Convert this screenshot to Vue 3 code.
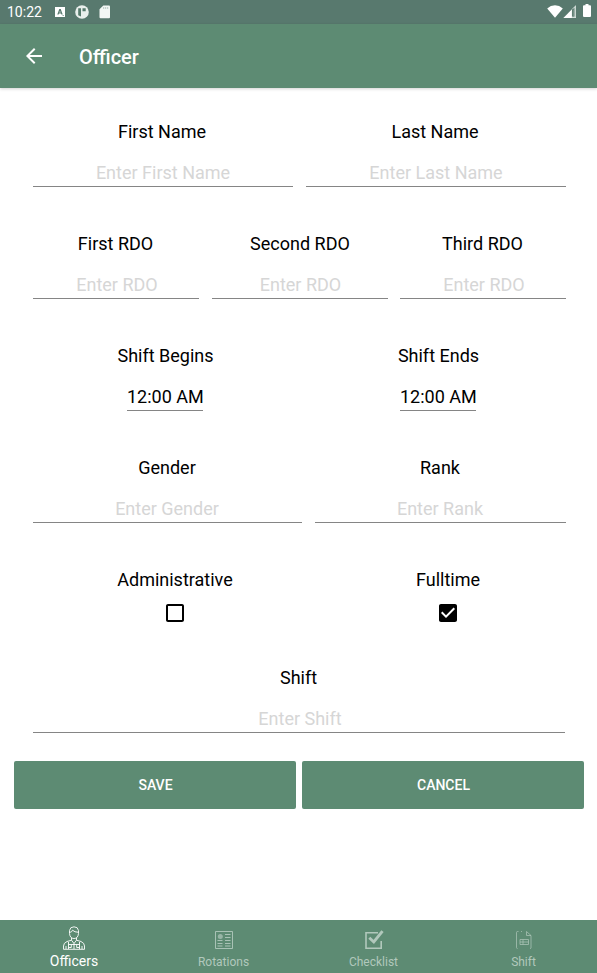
<script setup>
import { reactive, ref } from 'vue'

const rows = [
  { name: 'pair', fields: [
    { key: 'first', label: 'First Name', hint: 'Enter First Name' },
    { key: 'last', label: 'Last Name', hint: 'Enter Last Name' },
  ] },
  { name: 'triple', fields: [
    { key: 'rdo1', label: 'First RDO', hint: 'Enter RDO' },
    { key: 'rdo2', label: 'Second RDO', hint: 'Enter RDO' },
    { key: 'rdo3', label: 'Third RDO', hint: 'Enter RDO' },
  ] },
  { name: 'times', fields: [
    { key: 'begins', label: 'Shift Begins' },
    { key: 'ends', label: 'Shift Ends' },
  ] },
  { name: 'roles', fields: [
    { key: 'gender', label: 'Gender', hint: 'Enter Gender' },
    { key: 'rank', label: 'Rank', hint: 'Enter Rank' },
  ] },
  { name: 'flags', fields: [
    { key: 'admin', label: 'Administrative', check: true },
    { key: 'fulltime', label: 'Fulltime', check: true },
  ] },
  { name: 'single', fields: [{ key: 'shift', label: 'Shift', hint: 'Enter Shift' }] },
]

const form = reactive({
  first: '', last: '', rdo1: '', rdo2: '', rdo3: '',
  begins: '12:00 AM', ends: '12:00 AM',
  gender: '', rank: '', admin: false, fulltime: true, shift: '',
})

const tabs = ['Officers', 'Rotations', 'Checklist', 'Shift']
const active = ref('Officers')
</script>

<template>
  <div class="screen">
    <div class="status">
      <span class="clock">10:22</span>
      <svg class="s-app" width="10" height="10" viewBox="0 0 10 10">
        <path fill="#fff" fill-rule="evenodd" d="M0 0H10V10H0ZM4.3 2L2.3 7.6H3.6L4 6.5H6L6.4 7.6H7.7L5.7 2ZM5 3.7L5.6 5.4H4.4ZM7.6 8.3V9.1H8.8V8.3Z" />
      </svg>
      <svg class="s-circle" width="14" height="14" viewBox="0 0 14 14">
        <circle cx="7" cy="7" r="6.8" fill="#e9efec" />
        <path d="M3.2 3.2H6V11.5L3.2 10.2ZM7.5 3.2H10.7V6.2H7.5Z" fill="#557a6c" />
      </svg>
      <svg class="s-card" width="12" height="14" viewBox="0 0 12 14">
        <path d="M4.3.5H10Q11 .5 11 1.5V12.3Q11 13.3 10 13.3H1.5Q.5 13.3.5 12.3V4.3Z" fill="#f3f7f5" />
        <path d="M4.7 2V4M6.7 2V4M8.7 2V4" stroke="#a9bdb5" stroke-width=".8" />
      </svg>
      <span class="grow"></span>
      <svg class="s-wifi" width="16" height="13" viewBox="0 0 16 13">
        <path d="M.2 3.4Q3.6.3 8 .3T15.8 3.4L8 12.8Z" fill="#fff" />
      </svg>
      <svg class="s-signal" width="13" height="13" viewBox="0 0 13 13">
        <path d="M13 .3V13H.3Z" fill="#fff" />
        <path d="M12.9.5V12.8H8.8V4.6Z" fill="#c3d1cb" />
        <path d="M9 4.6L11.4 3V11.5H9Z" fill="#58796e" />
        <path d="M9.8 4.6H10.8V11.5H9.8Z" fill="#7b958c" />
      </svg>
      <svg class="s-battery" width="8" height="13" viewBox="0 0 8 13">
        <path d="M2.5 0H5.5V1.2H7Q8 1.2 8 2.2V12Q8 13 7 13H1Q0 13 0 12V2.2Q0 1.2 1 1.2H2.5Z" fill="#fff" />
      </svg>
    </div>

    <header class="toolbar">
      <svg width="24" height="24" viewBox="0 0 24 24">
        <path d="M20 11H7.83l5.59-5.59L12 4l-8 8 8 8 1.41-1.41L7.83 13H20v-2z" fill="#fff" />
      </svg>
      <h1>Officer</h1>
    </header>

    <main class="content">
      <div v-for="row in rows" :key="row.name" class="row" :class="row.name">
        <label v-for="f in row.fields" :key="f.key" class="field">
          <span class="label">{{ f.label }}</span>
          <template v-if="f.check">
            <input v-model="form[f.key]" type="checkbox" class="native">
            <svg class="box" width="18" height="18" viewBox="3 3 18 18">
              <path v-if="form[f.key]" d="M19 3H5c-1.11 0-2 .9-2 2v14c0 1.1.89 2 2 2h14c1.11 0 2-.9 2-2V5c0-1.1-.89-2-2-2zm-9 14l-5-5 1.41-1.41L10 14.17l7.59-7.59L19 8l-9 9z" />
              <path v-else d="M19 5v14H5V5h14m0-2H5c-1.1 0-2 .9-2 2v14c0 1.1.9 2 2 2h14c1.1 0 2-.9 2-2V5c0-1.1-.9-2-2-2z" />
            </svg>
          </template>
          <input v-else v-model="form[f.key]" type="text" class="input" :placeholder="f.hint">
        </label>
      </div>
    </main>

    <div class="actions">
      <button type="button">SAVE</button>
      <button type="button">CANCEL</button>
    </div>

    <nav class="tabs">
      <button v-for="t in tabs" :key="t" type="button" class="tab" :class="{ active: t === active }" @click="active = t">
        <svg v-if="t === 'Officers'" width="24" height="24" viewBox="0 0 24 24" fill="none" stroke="currentColor">
          <path d="M7.5 7.5V4.5Q8 .8 12 .8T16.5 4.5V7.5Q16 12.5 12 12.5T7.5 7.5M7.5 6.5Q10 6.2 10.5 4.2Q12.5 6.3 16.5 6.3" stroke-width=".9" />
          <path d="M9.5 12V14.2L5 15.5Q1.5 17 1.5 20V23.3H22.5V20Q22.5 17 19 15.5L14.5 14.2V12M9.5 14.2L12 17.5L14.5 14.2M12 17.5V23M6.5 16V23M17.5 16V23M6.5 18.5H17.5M4 20V23M20 20V23M9.3 18.5V21.5H6.5M14.7 18.5V21.5H17.5" stroke-width=".9" />
        </svg>
        <svg v-else-if="t === 'Rotations'" width="24" height="24" viewBox="0 0 24 24" fill="none" stroke="currentColor">
          <path d="M3.5 3.5H20.5V20.5H3.5Z" stroke-width=".9" />
          <circle cx="8.3" cy="8.5" r="2.5" fill="currentColor" stroke="none" opacity=".7" />
          <path d="M13 6.5H18.5M13 9.5H18.5M5.5 12.5H10.5M13 12.5H18.5M5.5 15.5H10.5M13 15.5H18.5M5.5 18H10.5M13 18H18.5" stroke-width=".9" />
        </svg>
        <svg v-else-if="t === 'Checklist'" width="24" height="24" viewBox="0 0 24 24" fill="none" stroke="currentColor">
          <path d="M16 4.8H4V20.2H19.2V13" stroke-width="1.6" />
          <path d="M7.3 9.8L11.8 14L20.5 3.2" stroke-width="2.9" />
        </svg>
        <svg v-else width="24" height="24" viewBox="0 0 24 24" fill="none" stroke="currentColor" stroke-width=".7">
          <path d="M6.5 3.5H5.5Q4.5 3.5 4.5 4.5V19.5Q4.5 20.5 5.5 20.5M9 3.5H10M14.5 3.5V7.5H19V20Q19 20.5 18 20.5M14.5 3.5L19 7.5" />
          <path d="M8 11.5H16.5V16.5H8ZM8 14H16.5M11 11.5V16.5" />
        </svg>
        <span>{{ t }}</span>
      </button>
    </nav>
  </div>
</template>

<style>
body {
  background: #fff;
}
</style>

<style scoped>
.screen {
  display: flex;
  flex-direction: column;
  height: 973px;
  overflow: hidden;
  font-family: Roboto, sans-serif;
  color: #000;
}

.screen * {
  box-sizing: border-box;
}

.status {
  display: flex;
  flex: none;
  height: 24px;
  padding: 0 6px 0 7px;
  background: #58796e;
}

.clock {
  width: 48px;
  color: #fff;
  font-size: 14px;
  line-height: 24px;
}

.s-app {
  margin: 7px 10px 0 0;
}

.s-circle {
  margin: 5px 9.5px 0 0;
}

.s-card {
  margin-top: 5px;
}

.grow {
  flex: 1;
}

.s-wifi {
  margin-top: 5px;
}

.s-signal {
  margin: 5px 7px 0 0;
}

.s-battery {
  margin-top: 4px;
}

.toolbar {
  display: flex;
  flex: none;
  align-items: center;
  gap: 33px;
  height: 64px;
  padding-left: 22px;
  background: #5d8b73;
  box-shadow: 0 1px 3px rgba(0, 0, 0, 0.18);
}

h1 {
  margin: 2px 0 0;
  color: #fff;
  font-size: 20px;
  font-weight: 500;
}

.content {
  display: flex;
  flex: none;
  flex-direction: column;
  gap: 45px;
  padding: 32px 31px 0 33px;
}

.row {
  display: grid;
  column-gap: 13px;
}

.pair {
  grid-template-columns: 260px 260px;
}

.triple {
  grid-template-columns: 166px 176px 166px;
  column-gap: 12.5px;
}

.times,
.flags {
  grid-template-columns: 264px 282px;
  column-gap: 0;
}

.flags {
  padding-left: 10px;
  height: 53px;
}

.roles {
  grid-template-columns: 269px 251px;
}

.single {
  grid-template-columns: 532px;
}

.field {
  display: flex;
  flex-direction: column;
  align-items: center;
  font-size: 18px;
}

.label {
  line-height: 24px;
}

.pair .label {
  padding-right: 2px;
}

.roles .label,
.triple .label,
.single .label {
  padding-right: 1px;
}

.triple .field:nth-child(2) .label {
  padding: 0 0 0 1px;
}

.times .label {
  padding-left: 1px;
}

.input {
  width: 100%;
  height: 43px;
  margin: 0;
  padding: 16px 0 2px;
  border: 0;
  border-bottom: 1px solid #858585;
  border-radius: 0;
  outline: 0;
  background: none;
  color: #000;
  font: inherit;
  line-height: 24px;
  text-align: center;
}

.triple .input,
.single .input {
  padding-left: 2px;
}

.roles .input {
  padding-right: 1px;
}

.input::placeholder {
  color: #d6d6d6;
  opacity: 1;
}

.times .input {
  width: 76px;
}

.native {
  width: 0;
  height: 0;
  margin: 0;
  appearance: none;
}

.box {
  flex: none;
  margin-top: 12px;
}

.actions {
  display: flex;
  flex: none;
  gap: 6px;
  margin: 28px 13px 0 14px;
}

.actions button {
  flex: 1;
  height: 48px;
  padding: 0 0 0 1px;
  border: 0;
  border-radius: 2px;
  background: #5d8b73;
  color: #fff;
  font: 500 14px Roboto, sans-serif;
}

.tabs {
  display: grid;
  grid-template-columns: repeat(4, 150px);
  justify-content: center;
  height: 53px;
  margin-top: auto;
  background: #5d8b73;
}

.tab {
  display: flex;
  flex-direction: column;
  align-items: center;
  padding: 8px 0 0;
  border: 0;
  background: none;
  color: #b1c8bc;
  font: 12px/16px Roboto, sans-serif;
}

.tab span {
  margin-top: 2px;
}

.active {
  padding-top: 6px;
  color: #fff;
  font-size: 14px;
}

.active span {
  margin-top: 3px;
  padding-left: 1px;
}
</style>
